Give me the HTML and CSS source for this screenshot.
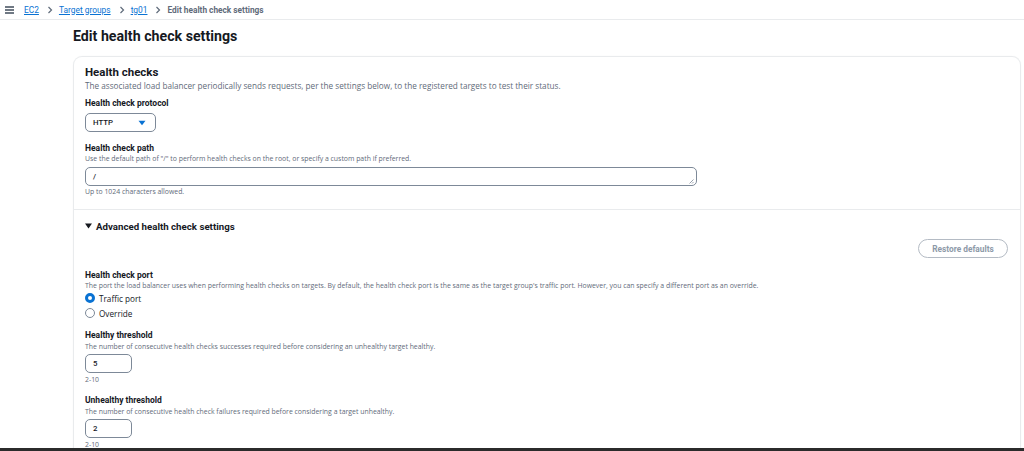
FILE: index.html
```html
<!DOCTYPE html>
<html lang="en">
<head>
<meta charset="utf-8">
<title>Edit health check settings</title>
<link rel="stylesheet" href="styles.css">
</head>
<body>
<nav class="topbar">
  <span class="menu" aria-hidden="true">
    <svg width="9" height="8" viewBox="0 0 9 8"><path d="M0 1h9M0 4h9M0 7h9" stroke="#414d5c" stroke-width="1.3"/></svg>
  </span>
  <a class="crumb" href="#">EC2</a>
  <span class="sep">
    <svg width="6" height="8" viewBox="0 0 6 8"><path d="M1.5 1l3 3-3 3" fill="none" stroke="#5f6b7a" stroke-width="1.2"/></svg>
  </span>
  <a class="crumb" href="#">Target groups</a>
  <span class="sep">
    <svg width="6" height="8" viewBox="0 0 6 8"><path d="M1.5 1l3 3-3 3" fill="none" stroke="#5f6b7a" stroke-width="1.2"/></svg>
  </span>
  <a class="crumb" href="#">tg01</a>
  <span class="sep">
    <svg width="6" height="8" viewBox="0 0 6 8"><path d="M1.5 1l3 3-3 3" fill="none" stroke="#5f6b7a" stroke-width="1.2"/></svg>
  </span>
  <span class="crumb-current">Edit health check settings</span>
</nav>

<main class="page">
  <h1 class="title">Edit health check settings</h1>

  <section class="card">
    <div class="card-section">
      <h2 class="card-title">Health checks</h2>
      <p class="card-desc">The associated load balancer periodically sends requests, per the settings below, to the registered targets to test their status.</p>

      <div class="field field-first">
        <div class="label">Health check protocol</div>
        <div class="select">
          <span>HTTP</span>
          <svg class="caret" width="8" height="6" viewBox="0 0 8 6"><path d="M0.5 0.8h7L4 5.2z" fill="#0972d3"/></svg>
        </div>
      </div>

      <div class="field">
        <div class="label">Health check path</div>
        <div class="hint">Use the default path of "/" to perform health checks on the root, or specify a custom path if preferred.</div>
        <div class="textbox wide">
          <span>/</span>
          <svg class="grip" width="6" height="6" viewBox="0 0 6 6"><path d="M5.5 1.5L1.5 5.5M5.5 4L4 5.5" stroke="#7d8998" stroke-width="0.8"/></svg>
        </div>
        <div class="constraint">Up to 1024 characters allowed.</div>
      </div>
    </div>

    <div class="card-section advanced">
      <div class="expander">
        <svg width="7" height="6" viewBox="0 0 7 6"><path d="M0 0.5h7L3.5 5.5z" fill="#16191f"/></svg>
        <span>Advanced health check settings</span>
      </div>

      <div class="actions">
        <button class="btn-restore" type="button">Restore defaults</button>
      </div>

      <div class="field field-port">
        <div class="label">Health check port</div>
        <div class="hint">The port the load balancer uses when performing health checks on targets. By default, the health check port is the same as the target group's traffic port. However, you can specify a different port as an override.</div>
        <div class="radios">
          <label class="radio"><span class="dot checked"></span>Traffic port</label>
          <label class="radio"><span class="dot"></span>Override</label>
        </div>
      </div>

      <div class="field field-threshold">
        <div class="label">Healthy threshold</div>
        <div class="hint">The number of consecutive health checks successes required before considering an unhealthy target healthy.</div>
        <div class="textbox small"><span>5</span></div>
        <div class="constraint">2-10</div>
      </div>

      <div class="field field-threshold">
        <div class="label">Unhealthy threshold</div>
        <div class="hint">The number of consecutive health check failures required before considering a target unhealthy.</div>
        <div class="textbox small"><span>2</span></div>
        <div class="constraint">2-10</div>
      </div>
    </div>
  </section>
</main>
<div class="bottom-edge"></div>
</body>
</html>
```
FILE: styles.css
```css
* { box-sizing: border-box; }

html, body {
  margin: 0;
  padding: 0;
  background: #ffffff;
  overflow: hidden;
}

body {
  font-family: "Open Sans", "Noto Sans", sans-serif;
  color: #16191f;
  height: 451px;
}

.topbar {
  display: flex;
  align-items: center;
  height: 20px;
  padding-left: 5px;
  border-bottom: 1px solid #e9ebed;
  font-family: Roboto, "Open Sans", sans-serif;
  font-size: 8.4px;
}

.menu {
  display: flex;
  width: 19px;
}

.crumb {
  color: #0972d3;
  text-decoration: underline;
  text-underline-offset: 1px;
}

.sep {
  display: flex;
  padding: 0 6px 0 8px;
}

.crumb-current {
  color: #5f6b7a;
  font-weight: 700;
  font-size: 8.3px;
}

.page {
  padding: 0 3px 0 73px;
}

.title {
  margin: 0;
  padding-top: 6px;
  height: 36px;
  font-family: Roboto, "Open Sans", sans-serif;
  font-size: 14.2px;
  line-height: 20px;
  font-weight: 700;
  color: #16191f;
}

.card {
  border: 1px solid #e9ebed;
  border-bottom: 0;
  border-radius: 9px 9px 0 0;
  box-shadow: 0 0 1px rgba(0, 7, 22, 0.08);
}

.card-section {
  padding: 7px 12px 12px 11px;
}

.card-section + .card-section {
  border-top: 1px solid #e9ebed;
}

.card-title {
  margin: 0;
  font-family: Roboto, "Open Sans", sans-serif;
  font-size: 11.5px;
  line-height: 16px;
  font-weight: 700;
}

.card-desc {
  margin: 0;
  font-size: 8.2px;
  line-height: 12px;
  color: #5f6b7a;
}

.label {
  font-family: Roboto, "Open Sans", sans-serif;
  font-size: 8.5px;
  line-height: 11px;
  font-weight: 700;
  color: #16191f;
}

.hint,
.constraint {
  font-size: 6.9px;
  line-height: 10px;
  color: #5f6b7a;
}

.field {
  margin-top: 11px;
}

.field-first {
  margin-top: 6px;
}

.field-first .select {
  margin-top: 4px;
}

.select {
  display: flex;
  align-items: center;
  justify-content: space-between;
  width: 71px;
  height: 19px;
  padding: 0 9px 0 7px;
  border: 1px solid #7d8998;
  border-radius: 5px;
  font-family: Roboto, "Open Sans", sans-serif;
  font-size: 7.8px;
  font-weight: 500;
  color: #16191f;
}

.textbox {
  display: flex;
  align-items: center;
  justify-content: space-between;
  height: 19px;
  margin-top: 3px;
  margin-bottom: 1px;
  padding: 0 2px 0 7px;
  border: 1px solid #7d8998;
  border-radius: 5px;
  font-family: Roboto, "Open Sans", sans-serif;
  font-size: 7.8px;
  font-weight: 500;
  color: #16191f;
}

.textbox.wide {
  width: 612px;
}

.grip {
  align-self: flex-end;
  margin-bottom: 1px;
}

.textbox.small {
  width: 47px;
  margin-top: 2px;
  margin-bottom: 2px;
}

.advanced {
  padding-top: 9px;
  padding-bottom: 0;
}

.expander {
  display: flex;
  align-items: center;
  gap: 4px;
  height: 14px;
  font-family: Roboto, "Open Sans", sans-serif;
  font-size: 9.7px;
  font-weight: 700;
}

.actions {
  display: flex;
  justify-content: flex-end;
  margin-top: 6px;
}

.btn-restore {
  width: 90px;
  height: 19px;
  padding: 0;
  border: 1px solid #b4bbc4;
  border-radius: 10px;
  background: #ffffff;
  font-family: Roboto, "Open Sans", sans-serif;
  font-size: 8.3px;
  font-weight: 700;
  color: #8d99a8;
}

.field-port {
  margin-top: 12px;
}

.radios {
  display: flex;
  flex-direction: column;
  gap: 1px;
}

.radio {
  display: flex;
  align-items: center;
  gap: 4px;
  height: 14px;
  font-size: 8.2px;
  color: #16191f;
}

.dot {
  width: 10px;
  height: 10px;
  border-radius: 50%;
  border: 1px solid #7d8998;
  background: #fff;
}

.dot.checked {
  border: 3px solid #0972d3;
}

.field-threshold {
  margin-top: 10px;
}

.field-threshold .hint {
  line-height: 11px;
}

.field-threshold:last-child .constraint {
  line-height: 9px;
}

.bottom-edge {
  position: fixed;
  left: 0;
  right: 0;
  bottom: 0;
  height: 3px;
  background: #2b2b2b;
}
```
